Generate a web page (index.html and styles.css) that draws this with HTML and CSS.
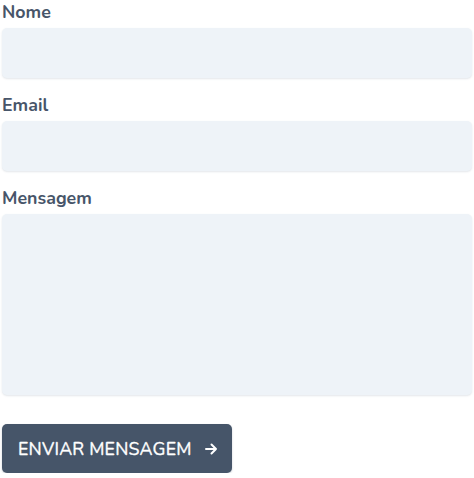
FILE: index.html
```html
<!DOCTYPE html>
<html lang="pt">
<head>
<meta charset="utf-8">
<link rel="stylesheet" href="styles.css">
</head>
<body>
<form class="form">
  <div class="field">
    <label class="label" for="nome">Nome</label>
    <input class="input" id="nome" type="text">
  </div>
  <div class="field">
    <label class="label" for="email">Email</label>
    <input class="input" id="email" type="email">
  </div>
  <div class="field">
    <label class="label" for="msg">Mensagem</label>
    <textarea class="input textarea" id="msg"></textarea>
  </div>
  <button class="button" type="button">
    <span class="button-text">ENVIAR MENSAGEM</span>
    <svg class="arrow" width="14" height="14" viewBox="0 0 14 14" fill="none" stroke="currentColor" stroke-width="2" stroke-linecap="round" stroke-linejoin="round"><path d="M2 7h10M7.5 2.5L12 7l-4.5 4.5"/></svg>
  </button>
</form>
</body>
</html>
```
FILE: styles.css
```css
html, body { margin: 0; padding: 0; background: #fff; }
body {
  font-family: "Nunito", "Lato", "Noto Sans", sans-serif;
  color: #475569;
}
.form {
  padding: 0 2px;
  display: flex;
  flex-direction: column;
}
.field {
  display: flex;
  flex-direction: column;
  gap: 4px;
  margin-bottom: 15px;
}
.label {
  font-size: 17.8px;
  font-weight: 700;
  line-height: 24px;
  color: #475569;
}
.input {
  box-sizing: border-box;
  height: 50px;
  width: 100%;
  border: none;
  border-radius: 5px;
  background: #eef3f8;
  box-shadow: 0 1px 2px rgba(100, 116, 139, 0.18);
  margin: 0;
  padding: 0 12px;
  font: inherit;
  outline: none;
}
.textarea {
  height: 181px;
  resize: none;
  display: block;
}
.field:last-of-type { margin-bottom: 29px; }
.button {
  align-self: flex-start;
  box-sizing: border-box;
  width: 230px;
  height: 49px;
  display: flex;
  align-items: center;
  justify-content: space-between;
  padding: 0 14px 0 16px;
  background: #465569;
  color: #fff;
  border: none;
  border-radius: 5px;
  font-family: inherit;
  font-size: 17.8px;
  font-weight: 400;
  letter-spacing: 0.2px;
  -webkit-text-stroke: 0.35px #fff;
  white-space: nowrap;
  box-shadow: 0 1px 2px rgba(71, 85, 105, 0.3);
}
.button-text { white-space: nowrap; }
.arrow { flex: none; }
```
